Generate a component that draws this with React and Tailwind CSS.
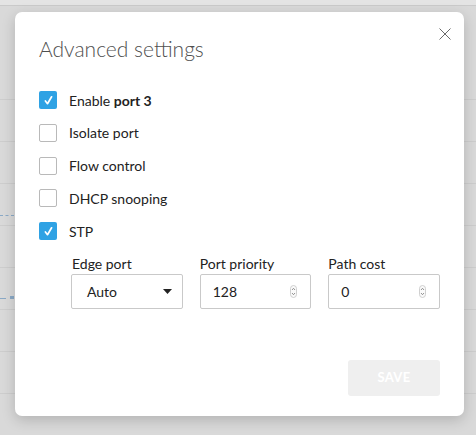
import React from "react";

function Check({ checked }) {
  if (checked) {
    return (
      <span className="flex h-[18px] w-[18px] shrink-0 items-center justify-center rounded-[2px] bg-[#2fa2e4]">
        <svg width="11" height="11" viewBox="0 0 11 11" fill="none">
          <path d="M2.4 6 L4.5 8.7 L8.6 1.8" stroke="#fff" strokeWidth="1.7" strokeLinecap="round" strokeLinejoin="round" />
        </svg>
      </span>
    );
  }
  return <span className="h-[18px] w-[18px] shrink-0 rounded-[2px] border border-[#b9b9b9] bg-white" />;
}

function Spinner() {
  return (
    <svg width="7" height="13" viewBox="0 0 7 13" className="shrink-0">
      <rect x="0.5" y="0.5" width="6" height="12" rx="3" fill="#fafafa" stroke="#c4c4c4" strokeWidth="0.8" />
      <path d="M2 5 L3.5 3.3 L5 5" stroke="#777" strokeWidth="0.8" fill="none" />
      <path d="M2 8 L3.5 9.7 L5 8" stroke="#777" strokeWidth="0.8" fill="none" />
    </svg>
  );
}

const rows = [
  { label: <>Enable <b className="font-bold">port 3</b></>, checked: true },
  { label: "Isolate port", checked: false },
  { label: "Flow control", checked: false },
  { label: "DHCP snooping", checked: false },
  { label: "STP", checked: true },
];

export default function App() {
  return (
    <div
      className="relative h-[435px] w-[476px] overflow-hidden bg-[#d9d9d9]"
      style={{ fontFamily: "Lato, 'Open Sans', sans-serif" }}
    >
      {/* background table */}
      <div className="h-[6px] border-b border-[#cacaca] bg-[#e4e4e4]" />
      <div className="h-[94px] border-b border-[#cdcdcd]" />
      <div className="h-[42px] border-b border-[#cdcdcd]" />
      <div className="h-[42px] border-b border-[#cdcdcd]" />
      <div className="flex h-[42px] items-end border-b border-[#cdcdcd] pb-[9px]">
        <div className="w-[14px] border-t border-dashed border-[#8aa9c6]" />
      </div>
      <div className="h-[42px] border-b border-[#cdcdcd]" />
      <div className="flex h-[42px] items-end gap-[4px] border-b border-[#cdcdcd] pb-[10px]">
        <div className="w-[6px] border-t border-[#8aa9c6]" />
        <div className="h-[3px] w-[4px] bg-[#8aa9c6]" />
      </div>
      <div className="h-[42px] border-b border-[#cdcdcd]" />
      <div className="h-[42px] border-b border-[#cdcdcd]" />
      <div className="h-[42px] border-b border-[#cdcdcd]" />

      {/* modal */}
      <div className="absolute left-[15px] top-[12px] flex h-[404px] w-[449px] flex-col rounded-[7px] bg-white px-[24px] pt-[25px] shadow-[0_4px_14px_rgba(0,0,0,0.18)]">
        <button className="absolute right-[13px] top-[16px] flex h-[12px] w-[12px] items-center justify-center">
          <svg width="12" height="12" viewBox="0 0 12 12">
            <path d="M0.5 0.5 L11.5 11.5 M11.5 0.5 L0.5 11.5" stroke="#6a6a6a" strokeWidth="1" />
          </svg>
        </button>

        <h2 className="text-[21px] font-light leading-[24px] text-[#4f4f4f]">Advanced settings</h2>

        <div className="mt-[30px] flex flex-col gap-[14.75px]">
          {rows.map((r, i) => (
            <div key={i} className="flex h-[18px] items-center gap-[12px]">
              <Check checked={r.checked} />
              <span className="text-[14px] leading-[17px] text-[#222]">{r.label}</span>
            </div>
          ))}
        </div>

        <div className="ml-[32px] mt-[15px] grid grid-cols-3 gap-x-[17px]">
          <div className="flex flex-col gap-[2px]">
            <span className="pl-px text-[14px] leading-[17px] text-[#222]">Edge port</span>
            <div className="flex h-[35px] items-center justify-between rounded-[2px] border border-[#c9c9c9] pl-[15px] pr-[10px]">
              <span className="text-[14px] text-[#222]">Auto</span>
              <svg width="9" height="5" viewBox="0 0 9 5">
                <path d="M0 0 L9 0 L4.5 5 Z" fill="#222" />
              </svg>
            </div>
          </div>
          <div className="flex flex-col gap-[2px]">
            <span className="text-[14px] leading-[17px] text-[#222]">Port priority</span>
            <div className="flex h-[35px] items-center justify-between rounded-[2px] border border-[#c9c9c9] pl-[12px] pr-[13px]">
              <span className="text-[14px] text-[#222]">128</span>
              <Spinner />
            </div>
          </div>
          <div className="flex flex-col gap-[2px]">
            <span className="text-[14px] leading-[17px] text-[#222]">Path cost</span>
            <div className="flex h-[35px] items-center justify-between rounded-[2px] border border-[#c9c9c9] pl-[12px] pr-[13px]">
              <span className="text-[14px] text-[#222]">0</span>
              <Spinner />
            </div>
          </div>
        </div>

        <div className="mt-[51px] flex justify-end">
          <button className="flex h-[36px] w-[92px] items-center justify-center rounded-[3px] bg-[#efefef] text-[13px] font-bold tracking-[0.3px] text-white">
            SAVE
          </button>
        </div>
      </div>
    </div>
  );
}
